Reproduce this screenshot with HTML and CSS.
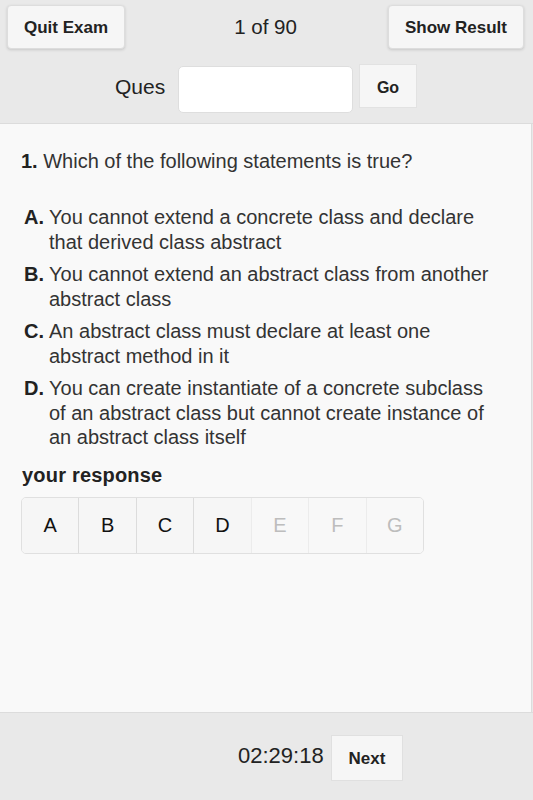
FILE: index.html
```html
<!DOCTYPE html>
<html>
<head>
<meta charset="utf-8">
<link rel="stylesheet" href="styles.css">
</head>
<body>
<div class="page">
  <header class="header">
    <div class="top-row">
      <button class="btn btn-top btn-quit">Quit Exam</button>
      <div class="counter">1 of 90</div>
      <button class="btn btn-top btn-result">Show Result</button>
    </div>
    <div class="ques-row">
      <span class="ques-label">Ques</span>
      <input class="ques-input" type="text">
      <button class="btn btn-go">Go</button>
    </div>
  </header>
  <main class="content">
    <p class="question"><b>1.</b> Which of the following statements is true?</p>
    <ol class="options">
      <li class="option"><b class="letter">A.</b><span>You cannot extend a concrete class and declare that derived class abstract</span></li>
      <li class="option"><b class="letter">B.</b><span>You cannot extend an abstract class from another abstract class</span></li>
      <li class="option"><b class="letter">C.</b><span>An abstract class must declare at least one abstract method in it</span></li>
      <li class="option"><b class="letter">D.</b><span>You can create instantiate of a concrete subclass of an abstract class but cannot create instance of an abstract class itself</span></li>
    </ol>
    <div class="response-label">your response</div>
    <div class="choices">
      <div class="choice">A</div>
      <div class="choice">B</div>
      <div class="choice">C</div>
      <div class="choice">D</div>
      <div class="choice disabled">E</div>
      <div class="choice disabled">F</div>
      <div class="choice disabled">G</div>
    </div>
  </main>
  <footer class="footer">
    <span class="timer">02:29:18</span>
    <button class="btn btn-next">Next</button>
  </footer>
</div>
</body>
</html>
```
FILE: styles.css
```css
html, body {
  margin: 0;
  padding: 0;
}
body {
  font-family: "Liberation Sans", Arial, sans-serif;
  color: #222;
  background: #e9e9e9;
}
.page {
  display: flex;
  flex-direction: column;
  height: 800px;
  width: 533px;
}
.header {
  height: 124px;
  box-sizing: border-box;
  border-bottom: 1px solid #dcdcdc;
  background: #e9e9e9;
  display: flex;
  flex-direction: column;
}
.top-row {
  display: flex;
  align-items: flex-start;
  padding: 5px 9px 0 7px;
  height: 44px;
}
.btn {
  font-family: "Liberation Sans", Arial, sans-serif;
  font-weight: bold;
  color: #222;
  background: #f6f6f6;
  border: 1px solid #dddddd;
  margin: 0;
  padding: 0;
  cursor: pointer;
}
.btn-top {
  height: 44px;
  font-size: 17px;
  border-radius: 4px;
  box-shadow: 0 1px 3px rgba(0,0,0,0.15);
  padding-top: 1px;
}
.btn-quit {
  width: 118px;
}
.btn-result {
  width: 136px;
}
.counter {
  flex: 1;
  text-align: center;
  font-size: 20.5px;
  line-height: 44px;
  margin-left: 18px;
  height: 44px;
}
.ques-row {
  display: flex;
  align-items: flex-start;
  padding-left: 115px;
  margin-top: 15px;
}
.ques-label {
  font-size: 21px;
  width: 63px;
  line-height: 22px;
  margin-top: 12px;
}
.ques-input {
  width: 175px;
  height: 47px;
  box-sizing: border-box;
  border: 1px solid #dedede;
  border-radius: 5px;
  background: #fff;
  margin: 2px 6px 0 0;
  padding: 0 8px;
  font-size: 16px;
}
.btn-go {
  width: 58px;
  height: 44px;
  font-size: 16px;
  border-radius: 0;
  border-color: #e2e2e2;
  padding-top: 4px;
}
.content {
  flex: 1;
  background: #f9f9f9;
  border-right: 1px solid #dcdcdc;
  margin-right: 1px;
  padding: 0 0 0 21px;
  color: #333;
}
.question {
  font-size: 20px;
  margin: 25px 0 0 0;
  line-height: 24px;
}
.question b {
  color: #222;
}
.options {
  list-style: none;
  margin: 32px 0 0 3px;
  padding: 0;
  width: 472px;
}
.option {
  display: flex;
  font-size: 20px;
  line-height: 24.5px;
  margin-bottom: 8px;
}
.letter {
  width: 25px;
  flex: none;
  color: #222;
}
.response-label {
  font-weight: bold;
  font-size: 20px;
  letter-spacing: 0.2px;
  color: #222;
  margin: 14px 0 0 1px;
  line-height: 22px;
}
.choices {
  display: flex;
  margin-top: 11px;
  width: 403px;
  height: 57px;
  box-sizing: border-box;
  border: 1px solid #e0e0e0;
  border-radius: 5px;
  overflow: hidden;
}
.choice {
  flex: 1;
  display: flex;
  align-items: center;
  justify-content: center;
  font-size: 20px;
  color: #111;
  background: #f6f6f6;
  border-left: 1px solid #dcdcdc;
}
.choice:first-child {
  border-left: none;
}
.choice.disabled {
  color: #bdbdbd;
  background: #f8f8f8;
  border-left-color: #ececec;
}
.footer {
  height: 88px;
  box-sizing: border-box;
  border-top: 1px solid #dcdcdc;
  background: #e9e9e9;
  display: flex;
  align-items: flex-start;
  padding-left: 238px;
  padding-top: 22px;
}
.timer {
  font-size: 22px;
  line-height: 42px;
  width: 93px;
  color: #222;
}
.btn-next {
  width: 72px;
  height: 46px;
  font-size: 17px;
  border-radius: 0;
  border-color: #e0e0e0;
  padding-top: 2px;
}
```
